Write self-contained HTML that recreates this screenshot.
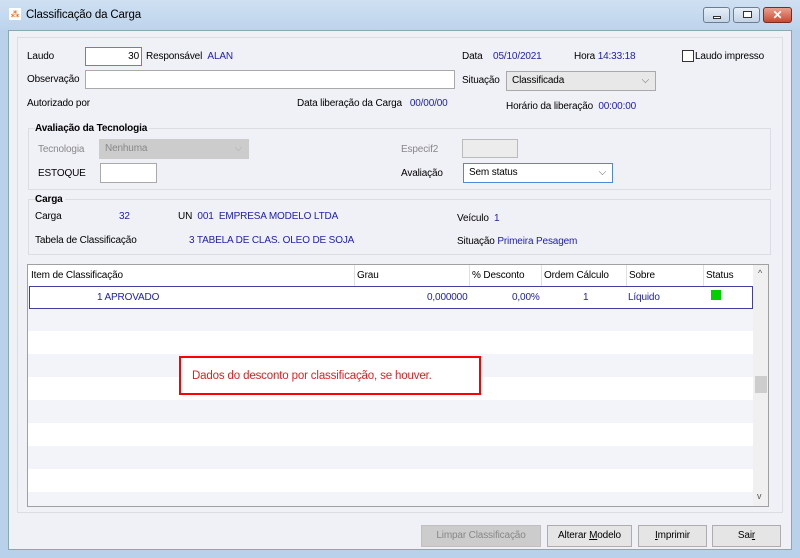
<!DOCTYPE html>
<html><head><meta charset="utf-8"><style>
*{box-sizing:border-box;margin:0;padding:0}
body{width:800px;height:558px;overflow:hidden;font-family:"Liberation Sans",sans-serif;font-size:10px;letter-spacing:-0.15px;color:#000;background:#b9d1ea;position:relative}
.a{position:absolute}
.blue{color:#2020b0}
.win{left:8px;top:30px;width:784px;height:520px;background:#f0f1f7;border:1px solid #8aa;}
.title{left:0;top:0;width:800px;height:30px;background:linear-gradient(#cfe0f2,#bdd4ec)}
.inp{background:#fff;border:1px solid #a9a9a9}
.grp{border:1px solid #dcdce4}
.btn{border:1px solid #adadad;background:#e5e5e5;text-align:center;line-height:20px;height:22px}
.dd{border:1px solid #a9a9a9;background:#e8e8e8;padding-left:5px;line-height:18px;height:20px}
.chev{position:absolute;right:6px;top:0;color:#666;font-size:10px}
</style></head><body>
<div class="a title"></div>
<div class="a" style="left:9px;top:8px;width:12px;height:12px;background:#fff;color:#e46000;font-size:9px;line-height:12px;text-align:center">⁂</div>
<div class="a" style="left:26px;top:9px;font-size:11.5px">Classificação da Carga</div>
<div class="a" style="left:703px;top:7px;width:27px;height:16px;border:1px solid #6c7d90;border-radius:3px;background:linear-gradient(#e6eef8,#c4d4e6)"><div class="a" style="left:9px;top:8px;width:8px;height:3px;border:1px solid #333;background:#fff"></div></div>
<div class="a" style="left:733px;top:7px;width:27px;height:16px;border:1px solid #6c7d90;border-radius:3px;background:linear-gradient(#e6eef8,#c4d4e6)"><div class="a" style="left:9px;top:3px;width:9px;height:7px;border:1px solid #333;background:#fff"></div></div>
<div class="a" style="left:763px;top:7px;width:29px;height:16px;border:1px solid #7a2a20;border-radius:3px;background:linear-gradient(#e8a090,#c84a30);color:#fff;font-weight:bold;text-align:center;line-height:14px;font-size:12px">✕</div>
<div class="a win"></div>
<div class="a grp" style="left:17px;top:37px;width:766px;height:476px"></div>

<div class="a" style="left:27px;top:51px">Laudo</div>
<div class="a inp" style="left:85px;top:47px;width:57px;height:19px;border-color:#4a8ad8;text-align:right;padding-right:2px;line-height:17px">30</div>
<div class="a" style="left:146px;top:51px">Responsável <span class="blue">&nbsp;ALAN</span></div>
<div class="a" style="left:462px;top:51px">Data <span class="blue">&nbsp;&nbsp;&nbsp;05/10/2021</span></div>
<div class="a" style="left:574px;top:51px">Hora <span class="blue">14:33:18</span></div>
<div class="a" style="left:682px;top:50px;width:12px;height:12px;border:1px solid #333;background:#fff"></div>
<div class="a" style="left:695px;top:51px">Laudo impresso</div>
<div class="a" style="left:27px;top:74px">Observação</div>
<div class="a inp" style="left:85px;top:70px;width:370px;height:19px"></div>
<div class="a" style="left:462px;top:75px">Situação</div>
<div class="a dd" style="left:506px;top:71px;width:150px">Classificada<span class="chev">⌵</span></div>
<div class="a" style="left:27px;top:98px">Autorizado por</div>
<div class="a" style="left:297px;top:98px">Data liberação da Carga <span class="blue">&nbsp;&nbsp;00/00/00</span></div>
<div class="a" style="left:506px;top:101px">Horário da liberação <span class="blue">&nbsp;00:00:00</span></div>

<div class="a grp" style="left:28px;top:128px;width:743px;height:62px"></div>
<div class="a" style="left:35px;top:123px;font-weight:bold;background:#f0f1f7;padding-right:2px">Avaliação da Tecnologia</div>
<div class="a" style="left:38px;top:144px;color:#888">Tecnologia</div>
<div class="a dd" style="left:99px;top:139px;width:150px;background:#ccc;color:#888;border-color:#ccc">Nenhuma<span class="chev" style="color:#aaa">⌵</span></div>
<div class="a" style="left:401px;top:144px;color:#888">Especif2</div>
<div class="a" style="left:462px;top:139px;width:56px;height:19px;border:1px solid #bbb;background:#ececec"></div>
<div class="a" style="left:38px;top:168px">ESTOQUE</div>
<div class="a inp" style="left:100px;top:163px;width:57px;height:20px"></div>
<div class="a" style="left:401px;top:168px">Avaliação</div>
<div class="a dd" style="left:463px;top:163px;width:150px;background:#fff;border-color:#4a8ad8">Sem status<span class="chev">⌵</span></div>

<div class="a grp" style="left:28px;top:199px;width:743px;height:56px"></div>
<div class="a" style="left:35px;top:194px;font-weight:bold;background:#f0f1f7;padding-right:2px">Carga</div>
<div class="a" style="left:35px;top:211px">Carga</div>
<div class="a blue" style="left:119px;top:211px">32</div>
<div class="a" style="left:178px;top:211px">UN <span class="blue">&nbsp;001 &nbsp;EMPRESA MODELO LTDA</span></div>
<div class="a" style="left:457px;top:213px">Veículo <span class="blue">&nbsp;1</span></div>
<div class="a" style="left:35px;top:235px">Tabela de Classificação</div>
<div class="a blue" style="left:189px;top:235px">3 TABELA DE CLAS. OLEO DE SOJA</div>
<div class="a" style="left:457px;top:236px">Situação <span class="blue">Primeira Pesagem</span></div>

<div class="a" style="left:27px;top:264px;width:742px;height:243px;border:1px solid #a0a0a0;background:#f3f4f9;overflow:hidden">
 <div class="a" style="left:0;top:0;width:725px;height:21px;background:#fff"></div>
 <div class="a" style="left:3px;top:5px">Item de Classificação</div>
 <div class="a" style="left:326px;top:0;height:21px;border-left:1px solid #e0e0e0;padding:5px 2px">Grau</div>
 <div class="a" style="left:441px;top:0;height:21px;border-left:1px solid #e0e0e0;padding:5px 2px">% Desconto</div>
 <div class="a" style="left:513px;top:0;height:21px;border-left:1px solid #e0e0e0;padding:5px 2px">Ordem Cálculo</div>
 <div class="a" style="left:598px;top:0;height:21px;border-left:1px solid #e0e0e0;padding:5px 2px">Sobre</div>
 <div class="a" style="left:675px;top:0;height:21px;border-left:1px solid #e0e0e0;padding:5px 2px">Status</div>
 <div class="a" style="left:1px;top:21px;width:724px;height:23px;background:#fff;border:1px solid #4040a0"></div>
 <div class="a blue" style="left:69px;top:27px">1 APROVADO</div>
 <div class="a blue" style="left:399px;top:27px">0,000000</div>
 <div class="a blue" style="left:484px;top:27px">0,00%</div>
 <div class="a blue" style="left:555px;top:27px">1</div>
 <div class="a blue" style="left:600px;top:27px">Líquido</div>
 <div class="a" style="left:683px;top:25px;width:10px;height:10px;background:#00d000"></div>
 <div class="a" style="left:0;top:66px;width:725px;height:23px;background:#fff"></div>
 <div class="a" style="left:0;top:112px;width:725px;height:23px;background:#fff"></div>
 <div class="a" style="left:0;top:158px;width:725px;height:23px;background:#fff"></div>
 <div class="a" style="left:0;top:204px;width:725px;height:23px;background:#fff"></div>
 <div class="a" style="left:725px;top:0;width:16px;height:243px;background:#f0f0f0"></div>
 <div class="a" style="left:730px;top:3px;font-size:9px;color:#555">^</div>
 <div class="a" style="left:727px;top:111px;width:12px;height:17px;background:#cdcdcd"></div>
 <div class="a" style="left:729px;top:226px;font-size:9px;color:#555">v</div>
</div>
<div class="a" style="left:179px;top:356px;width:302px;height:39px;border:2px solid #f00;background:#fff;color:#e02020;font-size:11.5px;padding:12px 0 0 11px">Dados do desconto por classificação, se houver.</div>

<div class="a btn" style="left:421px;top:525px;width:120px;background:#ccc;border-color:#bfbfbf;color:#888">Limpar Classificação</div>
<div class="a btn" style="left:547px;top:525px;width:85px">Alterar <u>M</u>odelo</div>
<div class="a btn" style="left:638px;top:525px;width:69px"><u>I</u>mprimir</div>
<div class="a btn" style="left:712px;top:525px;width:69px">Sai<u>r</u></div>
</body></html>
